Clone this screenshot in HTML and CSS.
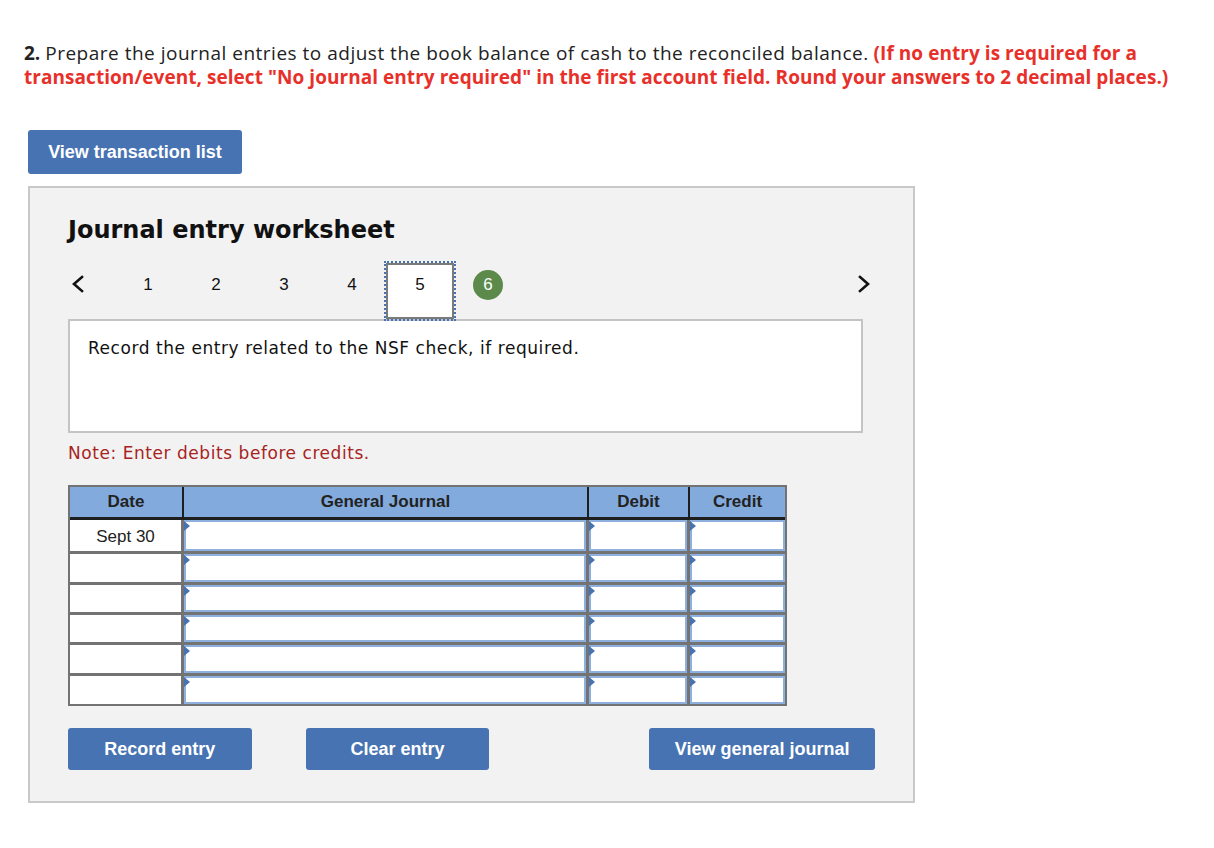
FILE: index.html
```html
<!DOCTYPE html>
<html lang="en">
<head>
<meta charset="utf-8">
<title>Journal entry worksheet</title>
<link rel="stylesheet" href="styles.css">
</head>
<body>
<div class="page">
  <p class="question"><b>2.</b> <span class="stem">Prepare the journal entries to adjust the book balance of cash to the reconciled balance.</span> <span class="instr">(If no entry is required for a<br>transaction/event, select "No journal entry required" in the first account field. Round your answers to 2 decimal places.)</span></p>

  <button class="btn btn-list" type="button">View transaction list</button>

  <section class="panel">
    <h2 class="panel-title">Journal entry worksheet</h2>

    <nav class="steps">
      <span class="step-arrow step-prev">
        <svg width="14" height="18" viewBox="0 0 14 18"><path d="M11 2 L3 9 L11 16" fill="none" stroke="#111" stroke-width="2.6" stroke-linecap="square"/></svg>
      </span>
      <span class="step">1</span>
      <span class="step">2</span>
      <span class="step">3</span>
      <span class="step">4</span>
      <span class="step step-current">5</span>
      <span class="step"><span class="step-done">6</span></span>
      <span class="step-arrow step-next">
        <svg width="14" height="18" viewBox="0 0 14 18"><path d="M3 2 L11 9 L3 16" fill="none" stroke="#111" stroke-width="2.6" stroke-linecap="square"/></svg>
      </span>
    </nav>

    <div class="prompt">Record the entry related to the NSF check, if required.</div>

    <p class="note">Note: Enter debits before credits.</p>

    <table class="journal">
      <thead>
        <tr>
          <th class="c-date">Date</th>
          <th class="c-acct">General Journal</th>
          <th class="c-debit">Debit</th>
          <th class="c-credit">Credit</th>
        </tr>
      </thead>
      <tbody>
        <tr class="r1">
          <td class="c-date">Sept 30</td>
          <td><div class="field"></div></td>
          <td><div class="field"></div></td>
          <td><div class="field"></div></td>
        </tr>
        <tr class="r2">
          <td class="c-date"></td>
          <td><div class="field"></div></td>
          <td><div class="field"></div></td>
          <td><div class="field"></div></td>
        </tr>
        <tr>
          <td class="c-date"></td>
          <td><div class="field"></div></td>
          <td><div class="field"></div></td>
          <td><div class="field"></div></td>
        </tr>
        <tr>
          <td class="c-date"></td>
          <td><div class="field"></div></td>
          <td><div class="field"></div></td>
          <td><div class="field"></div></td>
        </tr>
        <tr class="r5">
          <td class="c-date"></td>
          <td><div class="field"></div></td>
          <td><div class="field"></div></td>
          <td><div class="field"></div></td>
        </tr>
        <tr class="r6">
          <td class="c-date"></td>
          <td><div class="field"></div></td>
          <td><div class="field"></div></td>
          <td><div class="field"></div></td>
        </tr>
      </tbody>
    </table>

    <div class="actions">
      <button class="btn btn-record" type="button">Record entry</button>
      <button class="btn btn-clear" type="button">Clear entry</button>
      <button class="btn btn-view" type="button">View general journal</button>
    </div>
  </section>
</div>
</body>
</html>
```

FILE: styles.css
```css
html, body {
  margin: 0;
  padding: 0;
  background: #ffffff;
}

.page {
  padding: 41px 0 40px 24px;
}

.question {
  margin: 0;
  font-family: "Open Sans", Lato, sans-serif;
  font-size: 19px;
  line-height: 24px;
  color: #222222;
  white-space: nowrap;
}

.question b {
  font-weight: 700;
}

.stem {
  letter-spacing: 0.5px;
}

.instr {
  color: #e8302a;
  font-weight: 700;
  letter-spacing: 0.05px;
}

.btn {
  display: inline-flex;
  align-items: center;
  justify-content: center;
  border: none;
  border-radius: 3px;
  background: #4773b3;
  color: #ffffff;
  font-family: "Liberation Sans", Arial, sans-serif;
  font-weight: 700;
  font-size: 18px;
  padding: 0;
  cursor: pointer;
}

.btn-list {
  margin: 41px 0 0 4px;
  width: 214px;
  height: 44px;
}

.panel {
  margin: 12px 0 0 4px;
  width: 887px;
  box-sizing: border-box;
  border: 2px solid #c8c8c8;
  background: #f2f2f2;
  padding: 0 38px 31px 38px;
}

.panel-title {
  margin: 0;
  padding-top: 28px;
  font-family: "DejaVu Sans", Verdana, sans-serif;
  font-weight: 700;
  font-size: 24px;
  line-height: 28px;
  color: #111111;
}

.steps {
  margin-top: 19px;
  display: flex;
  align-items: flex-start;
  height: 56px;
  font-family: "Liberation Sans", Arial, sans-serif;
  font-size: 17px;
  color: #111111;
}

.step-arrow {
  display: flex;
  align-items: center;
  height: 42px;
}

.step-prev {
  width: 46px;
  padding-left: 3px;
  box-sizing: border-box;
}

.step-next {
  margin-left: auto;
  margin-right: 4px;
}

.step {
  width: 68px;
  height: 56px;
  display: flex;
  align-items: flex-start;
  justify-content: center;
  padding-top: 12px;
  box-sizing: border-box;
  line-height: 20px;
}

.step-current {
  background: #ffffff;
  border: 2px solid #7a7a7a;
  outline: 2px dotted #4773b3;
  outline-offset: 0;
  padding-top: 10px;
}

.step-done {
  width: 30px;
  height: 30px;
  margin-top: -5px;
  border-radius: 50%;
  background: #5b8a4b;
  color: #ffffff;
  display: flex;
  align-items: center;
  justify-content: center;
}

.prompt {
  background: #ffffff;
  border: 2px solid #c4c4c4;
  height: 114px;
  box-sizing: border-box;
  padding: 17px 18px;
  font-family: "DejaVu Sans", Verdana, sans-serif;
  font-size: 17px;
  letter-spacing: 0.55px;
  line-height: 20px;
  color: #111111;
  width: 795px;
}

.note {
  margin: 10px 0 0 0;
  font-family: "DejaVu Sans", Verdana, sans-serif;
  font-size: 17px;
  letter-spacing: 0.55px;
  line-height: 20px;
  color: #a8231e;
}

.journal {
  margin-top: 22px;
  width: 719px;
  table-layout: fixed;
  border-collapse: separate;
  border-spacing: 0;
  border: 2px solid #737373;
  font-family: "Liberation Sans", Arial, sans-serif;
  font-size: 17px;
  color: #222222;
}

.journal th {
  background: #82aadd;
  height: 33px;
  box-sizing: border-box;
  border-right: 2px solid #1e1e1e;
  border-bottom: 3px solid #1e1e1e;
  font-weight: 700;
  padding: 0;
  text-align: center;
}

.journal th:last-child {
  border-right: none;
}

.journal th.c-date { width: 114px; }
.journal th.c-acct { width: 405px; }
.journal th.c-debit { width: 101px; }
.journal th.c-credit { width: 95px; }

.journal td {
  height: 30px;
  box-sizing: border-box;
  padding: 0;
  border-right: 3px solid #737373;
  border-bottom: 3px solid #737373;
  background: #ffffff;
  text-align: center;
  vertical-align: middle;
}

.journal tr.r1 td {
  height: 34px;
}

.journal tr.r2 td {
  height: 31px;
}

.journal tr.r5 td {
  height: 31px;
}

.journal td:last-child {
  border-right: none;
}

.journal tbody tr.r6 td {
  border-bottom: none;
  height: 28px;
}

.journal td.c-date {
  vertical-align: top;
  padding-top: 6px;
}

.journal tr.r1 td.c-date {
  padding-top: 7px;
}

.field {
  position: relative;
  height: 100%;
  min-height: 27px;
  box-sizing: border-box;
  border: 2px solid #8db0df;
  background: #ffffff;
}

.journal tr.r1 .field {
  min-height: 31px;
}

.journal tr.r2 .field,
.journal tr.r5 .field {
  min-height: 28px;
}

.journal tr.r6 .field {
  min-height: 28px;
}

.field::before {
  content: "";
  position: absolute;
  left: -2px;
  top: -1px;
  width: 0;
  height: 0;
  border-top: 5px solid transparent;
  border-bottom: 5px solid transparent;
  border-left: 6px solid #4773b3;
}

.actions {
  display: flex;
  margin-top: 22px;
}

.actions .btn {
  height: 42px;
}

.btn-record {
  width: 184px;
}

.btn-clear {
  width: 184px;
  margin-left: 54px;
}

.btn-view {
  width: 226px;
  margin-left: 160px;
}
```
